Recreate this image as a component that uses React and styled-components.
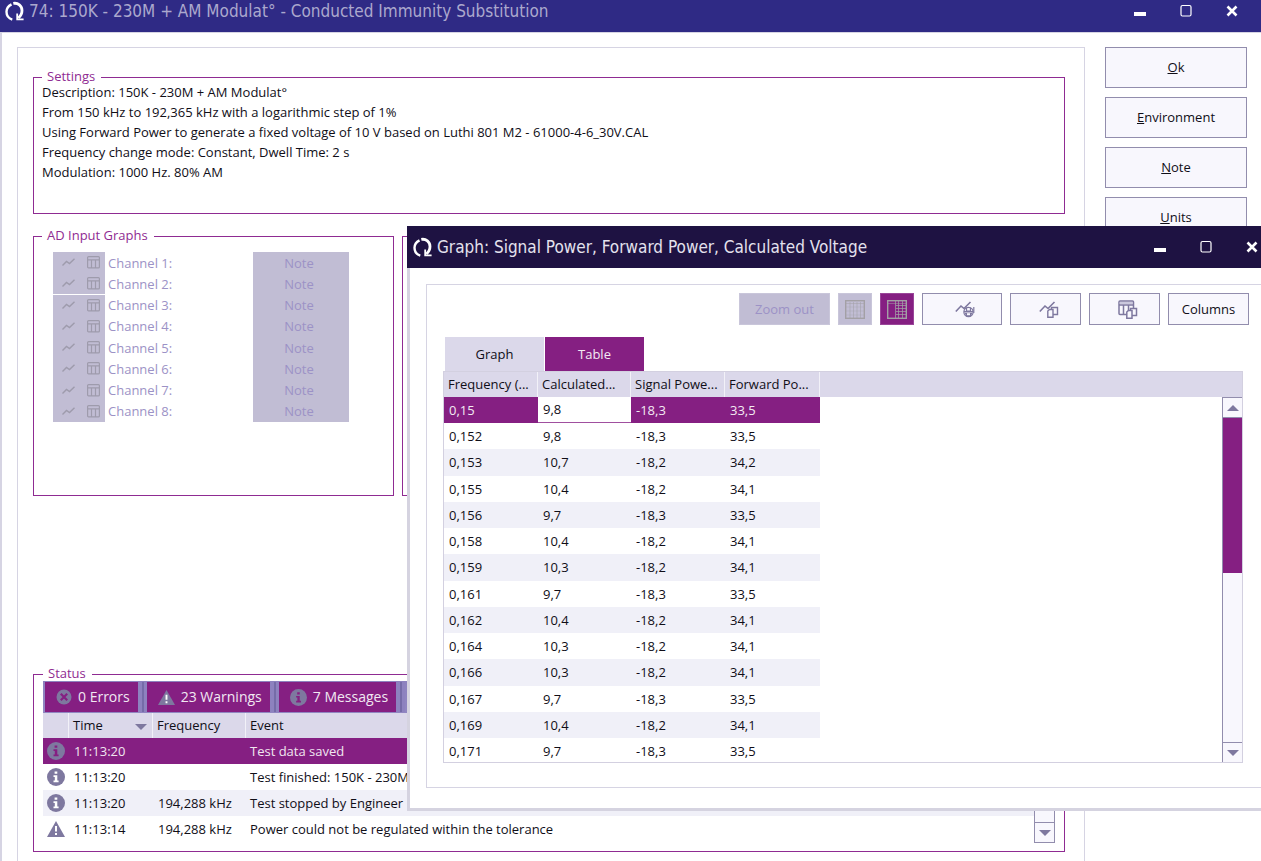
import React from "react";
import styled, { createGlobalStyle, css } from "styled-components";

const c = {
  ink: "#100e17",
  purple: "#851f82",
  legend: "#8f2b92",
  line: "#d6d4e3",
  header: "#dbd8ea",
  disabled: "#c1bdd4",
  disabledText: "#9c92c6",
  edge: "#928dad",
  face: "#f8f7fd",
  glyph: "#7e789f",
  stripe: "#f0f0f8",
};

const Global = createGlobalStyle`
  *, *::before, *::after { box-sizing: border-box; }
  body {
    margin: 0;
    background: #fff;
    color: ${c.ink};
    font: 13px/20px "Open Sans", "Noto Sans", sans-serif;
  }
  button { font: inherit; color: inherit; margin: 0; padding: 0; border: 0; background: none; }
`;

const Screen = styled.div`
  position: relative;
  height: 100vh;
  overflow: hidden;
  display: flex;
  flex-direction: column;
`;

/* ---------- window chrome ---------- */

const TitleBar = styled.header`
  flex: none;
  display: flex;
  align-items: center;
  gap: 5px;
  height: ${(p) => (p.$front ? "42px" : "32px")};
  padding: ${(p) => (p.$front ? "0 22px 0 6px" : "0 21px 10px 5px")};
  background: ${(p) => (p.$front ? "#1e1242" : "#2f2a85")};
  color: ${(p) => (p.$front ? "#e4e2ee" : "#aba8cd")};
`;

const TitleText = styled.h1`
  flex: 1;
  margin: 0;
  font: 400 17px/22px "DejaVu Sans Condensed", "DejaVu Sans", sans-serif;
  white-space: nowrap;
`;

const WindowButtons = styled.div`
  display: flex;
  gap: 29px;
  color: #fff;
`;

const WindowButton = styled.button`
  width: 17px;
  height: 18px;
  display: grid;
  place-items: center;
`;

const Logo = () => (
  <svg width="19" height="20" viewBox="0 0 19 20" fill="none" stroke="#fff" aria-hidden="true">
    <path d="M6.500 3.300C3 5 1.500 7.800 1.500 10.800C1.500 14.300 3.800 17.500 7.300 18.600" strokeWidth="2.400" />
    <path d="M8.300 2.400C13 1.500 17 5 17 9.500C17 12.800 15.500 15.200 13.300 17" strokeWidth="2.800" />
    <path d="M12.200 12.500V18.300H18.600" strokeWidth="1.800" />
  </svg>
);

const MinGlyph = () => (
  <svg width="12" height="14" viewBox="0 0 12 14" aria-hidden="true">
    <rect y="8" width="12" height="4" fill="currentColor" />
  </svg>
);
const MaxGlyph = () => (
  <svg width="12" height="14" viewBox="0 0 12 14" aria-hidden="true">
    <rect x="1" y="1.500" width="10" height="10.500" rx="1.500" fill="none" stroke="currentColor" strokeWidth="1.200" />
  </svg>
);
const CloseGlyph = () => (
  <svg width="12" height="14" viewBox="0 0 12 14" aria-hidden="true">
    <path d="M1.500 2.500L10.500 11.500M10.500 2.500L1.500 11.500" stroke="currentColor" strokeWidth="2.600" />
  </svg>
);

const Chrome = ({ title, front }) => (
  <TitleBar $front={front}>
    <Logo />
    <TitleText>{title}</TitleText>
    <WindowButtons>
      <WindowButton aria-label="Minimize"><MinGlyph /></WindowButton>
      <WindowButton aria-label="Maximize"><MaxGlyph /></WindowButton>
      <WindowButton aria-label="Close"><CloseGlyph /></WindowButton>
    </WindowButtons>
  </TitleBar>
);

/* ---------- main window ---------- */

const Body = styled.main`
  flex: 1;
  display: grid;
  grid-template-columns: minmax(0, 1fr) 142px;
  align-items: start;
  gap: 20px;
  padding: 14px 14px 0 15px;
  border: solid ${c.line};
  border-width: 1px 0 0 2px;
`;

const Panel = styled.div`
  display: flex;
  flex-direction: column;
  padding: 25px 19px 30px 15px;
  border: 1px solid ${c.line};
`;

const Group = styled.fieldset`
  min-width: 0;
  margin: 0;
  padding: ${(p) => p.$pad || "0 8px"};
  height: ${(p) => p.$height};
  border: 1px solid ${c.legend};
`;

const Legend = styled.legend`
  margin-left: ${(p) => (p.$wide ? "-11px" : "0")};
  padding: 0 6px 0 5px;
  height: 9px;
  line-height: 6px;
  color: ${c.legend};
  white-space: nowrap;
`;

const SettingsText = styled.div`
  white-space: nowrap;
`;

const Graphs = styled.div`
  display: grid;
  grid-template-columns: 361px minmax(0, 1fr);
  gap: 8px;
  margin: 18px 0 174px;
`;

const EmptyGroup = styled.div`
  margin-top: 4px;
  border: 1px solid ${c.legend};
`;

const Channels = styled.div`
  display: grid;
  grid-template-rows: repeat(8, 1fr);
  height: 170px;
  width: 296px;
`;

const Channel = styled.div`
  display: grid;
  grid-template-columns: 52px 1fr 96px;
  align-items: stretch;
  color: ${c.disabledText};
`;

const ChannelTools = styled.div`
  display: flex;
  justify-content: space-between;
  padding: 0 5px 0 9px;
  background: ${c.disabled};
  color: #9e9bac;
  border-bottom: ${(p) => (p.$rule ? "1px solid #fff" : "0")};
`;

const IconButton = styled.button`
  display: grid;
  place-items: center;
`;

const ChannelLabel = styled.span`
  align-self: center;
  padding-left: 3px;
`;

const ChannelNote = styled.button`
  padding-right: 4px;
  background: ${c.disabled};
`;

const Actions = styled.nav`
  display: grid;
  grid-auto-rows: 41px;
  gap: 9px;
`;

const Button = styled.button`
  display: grid;
  place-items: center;
  padding: 0 0 ${(p) => (p.$tall ? "2px" : "0")} ${(p) => (p.$icon ? "6px" : "0")};
  background: ${c.face};
  border: 1px solid ${c.edge};
  ${(p) => p.$width && css`width: ${p.$width}px;`}
  &:disabled {
    background: ${c.disabled};
    border-color: #c9c6da;
    color: ${c.disabledText};
  }
  &[aria-pressed="true"] {
    background: ${c.purple};
    border-color: #9a4699;
  }
`;

const ZigZag = () => (
  <svg width="13" height="9" viewBox="0 0 13 9" fill="none" stroke="currentColor" strokeWidth="1.400" aria-hidden="true">
    <path d="M.5 7.500L4.500 3.500L7.500 5.500L12.500 .8" />
  </svg>
);
const TableGlyph = () => (
  <svg width="13" height="13" viewBox="0 0 13 13" fill="none" stroke="currentColor" strokeWidth="1.200" aria-hidden="true">
    <rect x=".6" y=".6" width="11.800" height="11.300" rx="1" />
    <path d="M1 3.800H12M4.500 3.800V12M8.500 3.800V12" />
  </svg>
);

/* ---------- status ---------- */

const FilterBar = styled.div`
  display: flex;
  height: 32px;
  padding: 1px 2px;
  background: linear-gradient(#8d82bf, #9187c2);
`;

const FilterButton = styled.button`
  display: flex;
  align-items: center;
  gap: 6px;
  padding: 0 8px 0 11px;
  background: ${c.purple};
  color: #f1e9f2;
  font-size: 14px;
  white-space: nowrap;
`;

const FilterRule = styled.span`
  width: 9px;
  border: solid #8d82bf;
  border-width: 0 3px 0 4px;
  background: #756ca8;
`;

const LogArea = styled.div`
  display: flex;
  height: 130px;
`;

const Table = styled.table`
  flex: 1;
  table-layout: fixed;
  border-collapse: separate;
  border-spacing: 0;
  width: 0;
  align-self: flex-start;
`;

const Col = styled.col`
  width: ${(p) => p.$w}px;
`;

const Th = styled.th`
  height: 25px;
  padding: 0 0 2px 4px;
  background: ${c.header};
  border-right: 1px solid #f2f1f8;
  font-weight: 400;
  text-align: left;
  white-space: nowrap;
  overflow: hidden;
  &:last-child { border-right: 0; }
`;

const SortMark = styled.span`
  float: right;
  margin: 9px 5px 0 0;
  border: 6px solid transparent;
  border-top-color: ${c.glyph};
  border-bottom: 0;
`;

const Td = styled.td`
  height: 26px;
  padding: 0 0 1px ${(p) => (p.$tight ? "4px" : "5px")};
  white-space: nowrap;
  line-height: 20px;
  svg { display: block; }
`;

const LogRow = styled.tr`
  background: ${(p) => (p.$selected ? c.purple : p.$striped ? c.stripe : "#fff")};
  color: ${(p) => (p.$selected ? "#f0e6f0" : "inherit")};
`;

const InfoIcon = ({ size = 18, mark = "#fff" }) => (
  <svg width={size} height={size} viewBox="0 0 18 18" aria-hidden="true">
    <circle cx="9" cy="9" r="9" fill={c.glyph} />
    <path d="M7.600 3.500H10.300V5.800H7.600ZM6.500 7.300H10.300V12.500H11.600V14.200H6.500V12.500H7.800V9H6.500Z" fill={mark} />
  </svg>
);
const WarnIcon = ({ size = 18 }) => (
  <svg width={size} height={size} viewBox="0 0 18 18" aria-hidden="true">
    <path d="M9 1L18 17H0Z" fill={c.glyph} />
    <path d="M8 6H10V11.500H8ZM8 13H10V15H8Z" fill="#fff" />
  </svg>
);
const ErrorIcon = () => (
  <svg width="16" height="16" viewBox="0 0 16 16" aria-hidden="true">
    <circle cx="8" cy="8" r="7.500" fill={c.glyph} />
    <path d="M4.800 4.800L11.200 11.200M11.200 4.800L4.800 11.200" stroke={c.purple} strokeWidth="2.200" />
  </svg>
);

/* ---------- scroll bar ---------- */

const ScrollColumn = styled.div`
  display: flex;
  flex-direction: column;
  width: ${(p) => (p.$boxed ? "21px" : "20px")};
`;

const HeaderCap = styled.div`
  flex: none;
  height: 25px;
  background: ${c.header};
`;

const Track = styled.div`
  flex: 1;
  display: flex;
  flex-direction: column;
  background: ${c.face};
  border: solid ${c.edge};
  border-width: ${(p) => (p.$boxed ? "1px" : "1px 0 0 1px")};
`;

const Thumb = styled.div`
  height: ${(p) => p.$size}px;
  margin-bottom: auto;
  background: ${c.purple};
`;

const ArrowButton = styled.button`
  flex: none;
  height: 20px;
  display: grid;
  place-items: center;
  border: solid ${c.edge};
  border-width: ${(p) => (p.$up ? "0 0 1px" : "1px 0 0")};
  &::before {
    content: "";
    border: 6px solid transparent;
    ${(p) => (p.$up ? "border-bottom-color" : "border-top-color")}: ${c.glyph};
    ${(p) => (p.$up ? "border-top" : "border-bottom")}: 0;
  }
`;

const ScrollBar = ({ thumb, boxed }) => (
  <ScrollColumn $boxed={boxed}>
    <HeaderCap />
    <Track $boxed={boxed}>
      <ArrowButton $up aria-label="Scroll up" />
      <Thumb $size={thumb} />
      <ArrowButton aria-label="Scroll down" />
    </Track>
  </ScrollColumn>
);

/* ---------- graph window ---------- */

const Dialog = styled.section`
  position: absolute;
  top: 226px;
  left: 407px;
  right: -21px;
  background: #fff;
`;

const DialogBody = styled.div`
  padding: 16px 16px 20px;
  border: 3px solid #d5d3e0;
  border-top: 0;
`;

const DialogPanel = styled.div`
  padding: 8px 13px 24px 16px;
  border: 1px solid ${c.line};
`;

const Toolbar = styled.div`
  display: flex;
  justify-content: flex-end;
  gap: 8px;
  height: 32px;
  margin-bottom: 12px;
`;

const Tabs = styled.div`
  display: flex;
  gap: 1px;
  padding-left: 2px;
`;

const Tab = styled.button`
  width: 99px;
  height: 34px;
  background: ${(p) => (p.$active ? c.purple : c.header)};
  color: ${(p) => (p.$active ? "#f3eaf3" : c.ink)};
`;

const DataFrame = styled.div`
  display: flex;
  height: 392px;
  margin-right: 6px;
  overflow: hidden;
  border: 1px solid #d3d0e0;
`;

const DataRow = styled.tr`
  &:nth-child(even) ${Td} { background: #fff; }
  &:nth-child(odd) ${Td} { background: ${c.stripe}; }
  &:nth-child(4n + 3) ${Td} { height: 27px; }
  && ${Td}:last-child { background: #fff; }
  ${(p) => p.$selected && css`
    &&:first-child ${Td}:not(:last-child) { background: ${c.purple}; color: #f3eaf3; }
    &&:first-child ${Td}:nth-child(2) {
      background: #fff;
      color: ${c.ink};
      border-bottom: 1px solid #a04f9f;
    }
  `}
`;

const GridIcon = ({ half }) => (
  <svg width="20" height="19" viewBox="0 0 20 19" fill="none" stroke="#a3a0a5" aria-hidden="true">
    <rect x=".7" y=".7" width="18.600" height="17.600" strokeWidth="1.400" />
    <path d="M1 3.500H19" opacity=".5" />
    {half ? (
      <path d="M8.500 1V18M11.500 1V18M15.500 1V18M9 5.500H19M9 8.500H19M9 11.500H19M9 14.500H19" strokeWidth="1" opacity=".75" />
    ) : (
      <>
        <path d="M5 2V18M8.500 2V18M12 2V18M15.500 2V18" opacity=".55" />
        <path d="M1 7H19M1 11H19M1 15H19" opacity=".3" />
      </>
    )}
  </svg>
);

const SaveGraphIcon = () => (
  <svg width="20" height="17" viewBox="0 0 20 17" fill="none" stroke={c.glyph} strokeWidth="1.600" aria-hidden="true">
    <path d="M.8 10.500L6 5L9 7.500L15.500 1" />
    <circle cx="13.500" cy="11" r="4.600" strokeWidth="1.300" />
    <path d="M9 10.500H18M11.500 6.500V10H15.500V6.500" strokeWidth="1.200" />
    <path d="M9.500 11.500H17.500L16 15L13.500 16L11 15Z" fill={c.glyph} stroke="none" />
    <rect x="12" y="12.200" width="3" height="2" fill={c.face} stroke="none" />
    <path d="M18.800 6V12" strokeWidth="1.200" />
  </svg>
);
const CopyPages = () => (
  <>
    <path d="M12.500 6.500H18.500V13.500H12.500Z" fill={c.face} />
    <path d="M8.800 10L10.500 8.500H14V16.200H8.800Z" fill={c.face} />
  </>
);
const CopyGraphIcon = () => (
  <svg width="20" height="17" viewBox="0 0 20 17" fill="none" stroke={c.glyph} strokeWidth="1.400" aria-hidden="true">
    <path d="M.8 10.500L6 5L9 7.500L15.500 1" strokeWidth="1.600" />
    <CopyPages />
  </svg>
);
const CopyTableIcon = () => (
  <svg width="20" height="19" viewBox="0 0 20 19" fill="none" stroke={c.glyph} strokeWidth="1.500" aria-hidden="true">
    <rect x="1" y="1" width="14.500" height="13.500" rx="1" />
    <path d="M1 5H15.500M5.500 5V14M10.500 5V14" />
    <path d="M1.500 3H15" stroke="#bdb9d2" />
    <g transform="translate(0 2)">
      <CopyPages />
    </g>
  </svg>
);

/* ---------- data ---------- */

const settings = [
  "Description: 150K - 230M + AM Modulat°",
  "From 150 kHz to 192,365 kHz with a logarithmic step of 1%",
  "Using Forward Power to generate a fixed voltage of 10 V based on Luthi 801 M2 - 61000-4-6_30V.CAL",
  "Frequency change mode: Constant, Dwell Time: 2 s",
  "Modulation: 1000 Hz. 80% AM",
];

const actions = [["O", "k"], ["E", "nvironment"], ["N", "ote"], ["U", "nits"]];

const log = [
  ["info", "11:13:20", "", "Test data saved"],
  ["info", "11:13:20", "", "Test finished: 150K - 230M + AM Modulat°"],
  ["info", "11:13:20", "194,288 kHz", "Test stopped by Engineer"],
  ["warn", "11:13:14", "194,288 kHz", "Power could not be regulated within the tolerance"],
];

const data = [
  ["0,15", "9,8", "-18,3", "33,5"],
  ["0,152", "9,8", "-18,3", "33,5"],
  ["0,153", "10,7", "-18,2", "34,2"],
  ["0,155", "10,4", "-18,2", "34,1"],
  ["0,156", "9,7", "-18,3", "33,5"],
  ["0,158", "10,4", "-18,2", "34,1"],
  ["0,159", "10,3", "-18,2", "34,1"],
  ["0,161", "9,7", "-18,3", "33,5"],
  ["0,162", "10,4", "-18,2", "34,1"],
  ["0,164", "10,3", "-18,2", "34,1"],
  ["0,166", "10,3", "-18,2", "34,1"],
  ["0,167", "9,7", "-18,3", "33,5"],
  ["0,169", "10,4", "-18,2", "34,1"],
  ["0,171", "9,7", "-18,3", "33,5"],
];

const GraphWindow = () => (
  <Dialog role="dialog" aria-label="Graph">
    <Chrome front title="Graph: Signal Power, Forward Power, Calculated Voltage" />
    <DialogBody>
      <DialogPanel>
        <Toolbar>
          <Button $width={91} disabled>Zoom out</Button>
          <Button $width={34} disabled aria-label="Full grid"><GridIcon /></Button>
          <Button $width={34} aria-pressed="true" aria-label="Split grid"><GridIcon half /></Button>
          <Button $width={80} $icon aria-label="Save graph"><SaveGraphIcon /></Button>
          <Button $width={71} $icon aria-label="Copy graph"><CopyGraphIcon /></Button>
          <Button $width={71} $icon aria-label="Copy table"><CopyTableIcon /></Button>
          <Button $width={81}>Columns</Button>
        </Toolbar>
        <Tabs role="tablist">
          <Tab role="tab" aria-selected="false">Graph</Tab>
          <Tab role="tab" aria-selected="true" $active>Table</Tab>
        </Tabs>
        <DataFrame>
          <Table>
            <colgroup>
              <Col $w={94} /><Col $w={93} /><Col $w={94} /><Col $w={95} /><col />
            </colgroup>
            <thead>
              <tr>
                <Th>Frequency (...</Th>
                <Th>Calculated...</Th>
                <Th>Signal Powe...</Th>
                <Th>Forward Po...</Th>
                <Th />
              </tr>
            </thead>
            <tbody>
              {data.map((row, i) => (
                <DataRow key={row[0]} $selected={i === 0}>
                  {row.map((v, j) => <Td key={j}>{v}</Td>)}
                  <Td />
                </DataRow>
              ))}
            </tbody>
          </Table>
          <ScrollBar thumb={155} />
        </DataFrame>
      </DialogPanel>
    </DialogBody>
  </Dialog>
);

export default function App() {
  return (
    <Screen>
      <Global />
      <Chrome title="74: 150K - 230M + AM Modulat° - Conducted Immunity Substitution" />
      <Body>
        <Panel>
          <Group $height="141px">
            <Legend>Settings</Legend>
            {settings.map((s) => <SettingsText key={s}>{s}</SettingsText>)}
          </Group>
          <Graphs>
            <Group $height="264px" $pad="11px 19px 0">
              <Legend $wide>AD Input Graphs</Legend>
              <Channels>
                {[1, 2, 3, 4, 5, 6, 7, 8].map((n) => (
                  <Channel key={n}>
                    <ChannelTools $rule={n === 2}>
                      <IconButton disabled aria-label={`Graph of channel ${n}`}><ZigZag /></IconButton>
                      <IconButton disabled aria-label={`Table of channel ${n}`}><TableGlyph /></IconButton>
                    </ChannelTools>
                    <ChannelLabel>Channel {n}:</ChannelLabel>
                    <ChannelNote disabled>Note</ChannelNote>
                  </Channel>
                ))}
              </Channels>
            </Group>
            <EmptyGroup />
          </Graphs>
          <Group $height="182px" $pad="2px 9px 0">
            <Legend>Status</Legend>
            <FilterBar>
              <FilterButton><ErrorIcon />0 Errors</FilterButton>
              <FilterRule />
              <FilterButton><WarnIcon size={17} />23 Warnings</FilterButton>
              <FilterRule />
              <FilterButton><InfoIcon size={17} mark={c.purple} />7 Messages</FilterButton>
              <FilterRule />
            </FilterBar>
            <LogArea>
              <Table>
                <colgroup>
                  <Col $w={26} /><Col $w={84} /><Col $w={93} /><col />
                </colgroup>
                <thead>
                  <tr>
                    <Th />
                    <Th>Time<SortMark /></Th>
                    <Th>Frequency</Th>
                    <Th>Event</Th>
                  </tr>
                </thead>
                <tbody>
                  {log.map(([kind, time, freq, text], i) => (
                    <LogRow key={i} $selected={i === 0} $striped={i === 2}>
                      <Td $tight>
                        {kind === "warn" ? <WarnIcon /> : <InfoIcon mark={i === 0 ? c.purple : "#fff"} />}
                      </Td>
                      <Td>{time}</Td>
                      <Td>{freq}</Td>
                      <Td $tight>{text}</Td>
                    </LogRow>
                  ))}
                </tbody>
              </Table>
              <ScrollBar thumb={30} boxed />
            </LogArea>
          </Group>
        </Panel>
        <Actions>
          {actions.map(([key, rest]) => (
            <Button key={key} $tall><span><u>{key}</u>{rest}</span></Button>
          ))}
        </Actions>
      </Body>
      <GraphWindow />
    </Screen>
  );
}
